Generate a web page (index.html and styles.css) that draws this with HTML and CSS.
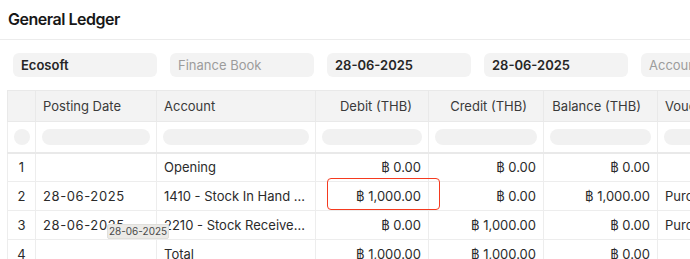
FILE: index.html
```html
<!DOCTYPE html>
<html>
<head>
<meta charset="utf-8">
<link rel="stylesheet" href="styles.css">
</head>
<body>
<div class="page">
  <header class="titlebar">
    <h1 class="title">General Ledger</h1>
  </header>
  <div class="filters">
    <div class="field filled">Ecosoft</div>
    <div class="field placeholder">Finance Book</div>
    <div class="field filled">28-06-2025</div>
    <div class="field filled">28-06-2025</div>
    <div class="field placeholder">Account</div>
  </div>
  <div class="table-wrap">
    <table class="grid">
      <colgroup>
        <col class="c-idx"><col class="c-date"><col class="c-acc"><col class="c-num1"><col class="c-num2"><col class="c-num3"><col class="c-vou">
      </colgroup>
      <thead>
        <tr class="head">
          <th></th>
          <th class="left">Posting Date</th>
          <th class="left">Account</th>
          <th class="right">Debit (THB)</th>
          <th class="right">Credit (THB)</th>
          <th class="right">Balance (THB)</th>
          <th class="left">Voucher Type</th>
        </tr>
        <tr class="filter-row">
          <td><span class="dot"></span></td>
          <td><span class="pill"></span></td>
          <td><span class="pill"></span></td>
          <td><span class="pill"></span></td>
          <td><span class="pill"></span></td>
          <td><span class="pill"></span></td>
          <td><span class="pill"></span></td>
        </tr>
      </thead>
      <tbody>
        <tr>
          <td class="idx">1</td><td class="date"></td><td class="acc">Opening</td>
          <td class="num">฿ 0.00</td><td class="num">฿ 0.00</td><td class="num">฿ 0.00</td><td class="vou"></td>
        </tr>
        <tr>
          <td class="idx">2</td><td class="date">28-06-2025</td><td class="acc">1410 - Stock In Hand - ES</td>
          <td class="num">฿ 1,000.00</td><td class="num">฿ 0.00</td><td class="num">฿ 1,000.00</td><td class="vou">Purchase Receipt</td>
        </tr>
        <tr>
          <td class="idx">3</td><td class="date">28-06-2025</td><td class="acc">2210 - Stock Received But Not Billed - ES</td>
          <td class="num">฿ 0.00</td><td class="num">฿ 1,000.00</td><td class="num">฿ 0.00</td><td class="vou">Purchase Receipt</td>
        </tr>
        <tr>
          <td class="idx">4</td><td class="date"></td><td class="acc">Total</td>
          <td class="num">฿ 1,000.00</td><td class="num">฿ 1,000.00</td><td class="num">฿ 0.00</td><td class="vou"></td>
        </tr>
      </tbody>
    </table>
    <div class="highlight"></div>
    <div class="tooltip">28-06-2025</div>
  </div>
</div>
</body>
</html>
```
FILE: styles.css
```css
* { box-sizing: border-box; }
html, body { margin: 0; padding: 0; background: #fff; overflow: hidden; }
body {
  font-family: Inter, "Noto Sans", "Liberation Sans", sans-serif;
  color: #1f1f1f;
  width: 690px;
  height: 259px;
}
.page { width: 690px; }
.titlebar {
  height: 40px;
  border-bottom: 1px solid #ececec;
  padding: 9px 0 0 8px;
}
.title {
  margin: 0;
  font-size: 16px;
  font-weight: 600;
  line-height: 20px;
  letter-spacing: -0.03em;
  color: #171717;
}
.filters {
  display: flex;
  gap: 13px;
  padding: 13px 0 0 13px;
  white-space: nowrap;
}
.field {
  flex: 0 0 144px;
  height: 24px;
  border-radius: 6px;
  background: #f3f3f3;
  font-size: 13px;
  line-height: 24px;
  padding: 0 8px;
  overflow: hidden;
}
.field.filled { font-weight: 600; color: #262626; }
.field.placeholder { color: #9c9c9c; }
.table-wrap {
  position: relative;
  margin-top: 13px;
  padding-left: 7px;
}
.grid {
  border-collapse: collapse;
  table-layout: fixed;
  width: 780px;
  font-size: 13px;
  color: #2b2b2b;
}
.c-idx { width: 28px; }
.c-date { width: 121px; }
.c-acc { width: 159px; }
.c-num1 { width: 113px; }
.c-num2 { width: 115px; }
.c-num3 { width: 114px; }
.c-vou { width: 130px; }
.grid th, .grid td {
  border: 1px solid #ededed;
  padding: 0 7px;
  white-space: nowrap;
  overflow: hidden;
  text-overflow: ellipsis;
}
.head th {
  height: 31px;
  background: #f3f3f3;
  font-weight: 400;
  color: #3a3a3a;
  border-color: #e9e9e9;
}
.head th.left { text-align: left; }
.head th.right { text-align: right; padding-right: 16px; }
.filter-row td {
  height: 31px;
  padding: 0 6px;
  border-bottom: 2px solid #e9e9e9;
  vertical-align: middle;
}
.pill {
  display: block;
  height: 16px;
  border-radius: 8px;
  background: #f1f1f1;
}
.dot {
  display: block;
  width: 16px;
  height: 16px;
  border-radius: 50%;
  background: #f1f1f1;
}
tbody td { height: 29px; }
.idx { text-align: center; padding: 0 !important; }
.date { letter-spacing: 0.6px; }
.num { text-align: right; }
.highlight {
  position: absolute;
  left: 327px;
  top: 88px;
  width: 113px;
  height: 32px;
  border: 1.5px solid #f53a1f;
  border-radius: 4px;
}
.tooltip {
  position: absolute;
  left: 107px;
  top: 134px;
  width: 62px;
  height: 15px;
  background: #ebeae7;
  border: 1px solid #e0dfdb;
  border-radius: 2px;
  font-size: 10px;
  line-height: 13px;
  text-align: center;
  color: #4a4a4a;
}
```
